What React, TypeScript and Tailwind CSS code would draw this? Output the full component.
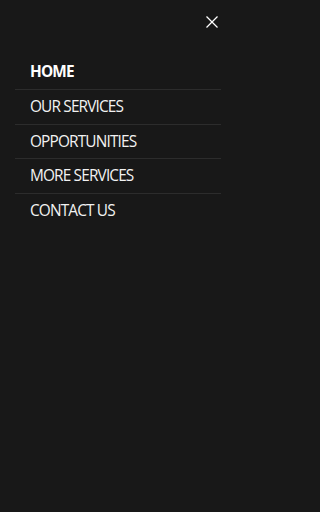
import React from 'react';

const links = ['HOME', 'OUR SERVICES', 'OPPORTUNITIES', 'MORE SERVICES', 'CONTACT US'];

const App = () => {
  return (
    <div className="min-h-[512px] w-full bg-[#181818] font-['Open_Sans',sans-serif]">
      <div className="w-[236px]">
        {/* Header with close */}
        <div className="flex h-[44px] items-center justify-end pr-[17px]">
          <button className="flex h-[14px] w-[14px] items-center justify-center text-white">
            <svg width="12" height="12" viewBox="0 0 12 12" fill="none" stroke="currentColor" strokeWidth="1.3">
              <line x1="0.5" y1="0.5" x2="11.5" y2="11.5" />
              <line x1="11.5" y1="0.5" x2="0.5" y2="11.5" />
            </svg>
          </button>
        </div>

        {/* Nav */}
        <ul className="mx-[15px] mt-[11px]">
          {links.map((label, i) => (
            <li
              key={label}
              className={
                i < links.length - 1
                  ? 'border-b border-[#2c2c2c]'
                  : ''
              }
            >
              <a
                href="#"
                className={
                  i === 0
                    ? 'block px-[15px] pt-[1px] text-[15.4px] leading-[32.8px] tracking-[-0.85px] font-bold text-white'
                    : 'block px-[15px] pt-[1px] text-[15.4px] leading-[32.8px] tracking-[-0.85px] text-[#f2f2f2]'
                }
              >
                {label}
              </a>
            </li>
          ))}
        </ul>
      </div>
    </div>
  );
};

export default App;
